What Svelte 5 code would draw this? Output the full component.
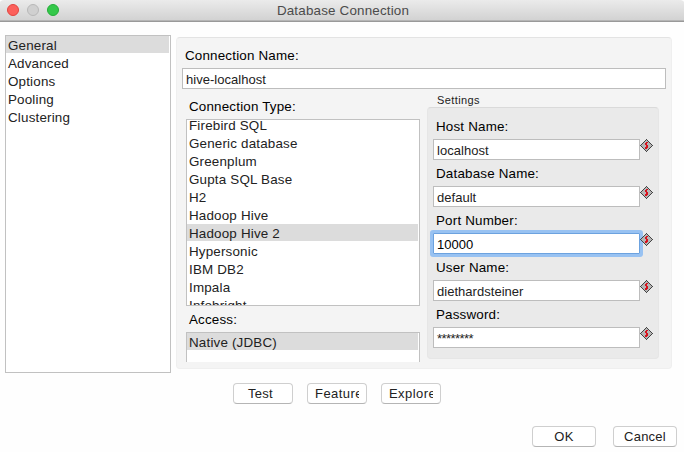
<script>
  const sections = ['General', 'Advanced', 'Options', 'Pooling', 'Clustering'];
  const types = ['Firebird SQL', 'Generic database', 'Greenplum', 'Gupta SQL Base', 'H2', 'Hadoop Hive',
    'Hadoop Hive 2', 'Hypersonic', 'IBM DB2', 'Impala', 'Infobright'];
  const fields = [
    { label: 'Host Name:', value: 'localhost' },
    { label: 'Database Name:', value: 'default' },
    { label: 'Port Number:', value: '10000', focus: true },
    { label: 'User Name:', value: 'diethardsteiner' },
    { label: 'Password:', value: '********', secret: true }
  ];
</script>

<div class="window">
  <header>
    <div class="lights"><i class="red"></i><i class="grey"></i><i class="green"></i></div>
    <h1>Database Connection</h1>
  </header>
  <main>
    <nav class="list">
      {#each sections as s, i}<div class="row" class:sel={i === 0}>{s}</div>{/each}
    </nav>
    <section class="panel">
      <div class="label name-label">Connection Name:</div>
      <div class="input name">hive-localhost</div>
      <div class="columns">
        <div class="left">
          <div class="label type-label">Connection Type:</div>
          <div class="list types">
            <div class="scroll">
              {#each types as t}<div class="row" class:sel={t === 'Hadoop Hive 2'}>{t}</div>{/each}
            </div>
          </div>
          <div class="label access-label">Access:</div>
          <div class="list access"><div class="row sel">Native (JDBC)</div></div>
        </div>
        <div class="right">
          <div class="legend">Settings</div>
          <div class="group">
            {#each fields as f}
              <div class="label field-label">{f.label}</div>
              <div class="field">
                <div class="input" class:focus={f.focus} class:secret={f.secret}>{f.value}</div>
                <svg width="13" height="13" viewBox="0 0 13 13">
                  <path d="M6.5.5 12.5 6.5 6.5 12.5.5 6.5Z" fill="#b5b5b5" />
                  <path d="M6 0h1v1H6zM5 1h1v1H5zM7 1h1v1H7zM4 2h1v1H4zM8 2h1v1H8zM3 3h1v1H3zM9 3h1v1H9zM2 4h1v1H2zM10 4h1v1h-1zM1 5h1v1H1zM11 5h1v1h-1zM0 6h1v1H0zM12 6h1v1h-1zM1 7h1v1H1zM11 7h1v1h-1zM2 8h1v1H2zM10 8h1v1h-1zM3 9h1v1H3zM9 9h1v1H9zM4 10h1v1H4zM8 10h1v1H8zM5 11h1v1H5zM7 11h1v1H7zM6 12h1v1H6z" fill="#444" shape-rendering="crispEdges" />
                  <path d="M6 3h2v1H6zM5 4h2v1H5zM5 5h2v1H5zM6 6h2v1H6zM6 7h2v1H6zM5 8h3v1H5zM5 9h2v1H5z" fill="#d8101c" shape-rendering="crispEdges" />
                </svg>
              </div>
            {/each}
          </div>
        </div>
      </div>
    </section>
  </main>
  <div class="actions">
    <button>Test</button>
    <button class="cut"><span>Feature</span></button>
    <button class="cut"><span>Explore</span></button>
  </div>
  <footer>
    <button>OK</button>
    <button>Cancel</button>
  </footer>
</div>

<style>
  :global(body) { margin: 0; background: #fff; }
  .window {
    width: 684px; height: 452px; overflow: hidden; background: #fefefe; color: #222;
    font: 13.4px/18px "Liberation Sans", Arial, sans-serif; letter-spacing: .18px; white-space: nowrap;
  }
  .window * { box-sizing: border-box; }
  header {
    height: 22px; display: grid; grid-template-columns: 80px 1fr 78px; align-items: start;
    background: linear-gradient(#ebebeb, #d1d1d1); border-bottom: 1px solid #999; box-shadow: inset 0 -1px #b5b5b5;
    border-radius: 4px 4px 0 0;
  }
  .lights { display: flex; gap: 8px; padding: 4px 0 0 7px; }
  .lights i { width: 12px; height: 12px; border-radius: 50%; border: 1px solid; }
  .red { background: #fc605b; border-color: #e2443f !important; }
  .grey { background: #d0d0d0; border-color: #b8b8b8 !important; }
  .green { background: #34c84a; border-color: #24ad38 !important; }
  h1 { margin: 0; padding-top: 2px; font-size: 13.4px; font-weight: 400; line-height: 18px; text-align: center; color: #4b4b4b; }
  main { display: flex; align-items: flex-start; padding: 13px 0 0 5px; }
  .list { background: #fff; border: 1px solid #c1c1c1; overflow: hidden; }
  nav.list { width: 166px; height: 338px; margin-right: 5px; }
  .row { height: 18px; padding-left: 2px; margin-right: 1px; line-height: 19px; }
  .row.sel { background: linear-gradient(#dcdcdc, #dcdcdc) no-repeat 0 0 / 100% 17px; }
  .panel {
    width: 496px; height: 332px; margin-top: 2px; padding: 9px 5px 0;
    background: #f4f4f4; border: 1px solid #efefef; border-top-color: #e3e3e3; border-radius: 4px;
  }
  .label { color: #000; height: 18px; }
  .name-label { padding-left: 3px; }
  .input {
    height: 21px; padding: 2px 0 0 3px; background: #fff; border: 1px solid #bdbdbd;
    font-size: 13px; line-height: 18px; letter-spacing: .03px;
  }
  .name { width: 484px; margin-top: 3px; }
  .columns { display: flex; padding-left: 4px; }
  .left { width: 234px; margin-right: 7px; padding-top: 9px; }
  .left .label { padding-left: 3px; }
  .types { height: 187px; margin-top: 3px; }
  .scroll { margin-top: -4px; }
  .access-label { margin-top: 5px; }
  .access { height: 30px; margin-top: 3px; border-bottom: 0; }
  .right { width: 232px; padding-top: 4px; }
  .legend { height: 14px; padding-left: 10px; font-size: 11px; line-height: 14px; letter-spacing: .4px; }
  .group {
    height: 252px; padding: 10px 0 0 5px; background: #eaeaea;
    border: 1px solid #e6e6e6; border-top-color: #dadada; border-radius: 4px;
  }
  .field-label { padding-left: 3px; }
  .field { display: flex; align-items: flex-start; padding-top: 3px; height: 29px; }
  .field .input { width: 207px; }
  .field .focus { border-color: #6ca2df; box-shadow: 0 0 0 3px #98c2f2; color: #000; border-radius: 1px; }
  .field .secret { letter-spacing: -.55px; }
  svg { display: block; }
  button {
    height: 21px; padding: 0; background: #fff; border: 1px solid #cfcfcf; border-bottom-color: #b5b5b5;
    border-radius: 4px; font: 13px/19px "Liberation Sans", Arial, sans-serif; color: #222; letter-spacing: .25px;
  }
  .actions { display: flex; gap: 14px; padding: 10px 0 0 233px; }
  .actions button { width: 60px; }
  .actions button:first-child { padding-right: 5px; }
  .actions .cut { display: flex; padding: 0 7px; letter-spacing: .45px; }
  .cut span { display: block; width: 44px; overflow: hidden; text-align: left; }
  footer { display: flex; justify-content: flex-end; gap: 17px; padding: 22px 7px 0 0; }
  footer button { width: 64px; }
</style>
